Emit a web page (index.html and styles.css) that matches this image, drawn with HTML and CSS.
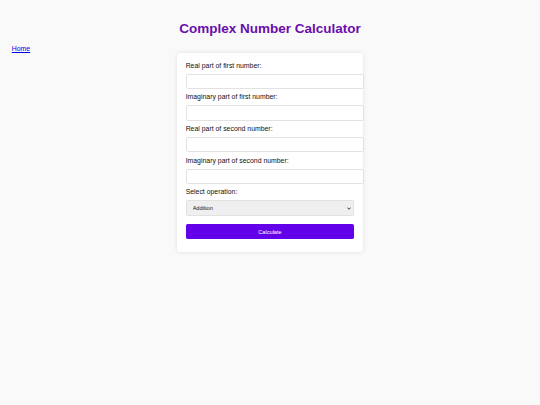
FILE: index.html
```html
<!DOCTYPE html>
<html lang="en">
<head>
<meta charset="utf-8">
<title>Complex Number Calculator</title>
<link rel="stylesheet" href="styles.css">
</head>
<body>
<h1 class="title">Complex Number Calculator</h1>
<div class="nav"><a href="#" class="nav-link">Home</a></div>
<div class="card">
  <form class="calc-form">
    <label class="field-label" for="r1">Real part of first number:</label>
    <input class="field-input" type="text" id="r1">
    <label class="field-label" for="i1">Imaginary part of first number:</label>
    <input class="field-input" type="text" id="i1">
    <label class="field-label" for="r2">Real part of second number:</label>
    <input class="field-input" type="text" id="r2">
    <label class="field-label" for="i2">Imaginary part of second number:</label>
    <input class="field-input" type="text" id="i2">
    <label class="field-label" for="op">Select operation:</label>
    <div class="select-wrap">
      <select class="field-select" id="op">
        <option>Addition</option>
        <option>Subtraction</option>
        <option>Multiplication</option>
        <option>Division</option>
      </select>
      <svg class="chevron" viewBox="0 0 10 7" width="4" height="3"><path d="M1 1.2 L5 5.4 L9 1.2" fill="none" stroke="#222" stroke-width="2.2"/></svg>
    </div>
    <button class="calc-btn" type="button">Calculate</button>
  </form>
</div>
</body>
</html>
```
FILE: styles.css
```css
html, body {
  background: #f9f9f9;
}
body {
  margin: 0;
  padding: 11.8px;
  font-family: "Liberation Sans", Arial, sans-serif;
  font-size: 6.9px;
  color: #111;
}
.title {
  font-size: 13.5px;
  line-height: 15.6px;
  color: #6a0dad;
  text-align: center;
  margin: 9px 0;
  font-weight: bold;
}
.nav {
  line-height: 7.8px;
}
.nav-link {
  color: #0000ee;
  text-decoration: underline;
}
.card {
  width: 168.75px;
  margin: 0 auto;
  padding: 8.44px;
  background: #fff;
  border-radius: 3.4px;
  box-shadow: 0 0 4px rgba(0, 0, 0, 0.1);
}
.calc-form {
  margin: 0;
}
.field-label {
  display: block;
  line-height: 8px;
  margin-bottom: 4.1px;
}
.field-input {
  display: block;
  width: 100%;
  height: 13.2px;
  padding: 0 3.6px;
  margin: 0 0 4.4px 0;
  border: 1px solid #e2e2e2;
  border-radius: 1.7px;
  background: #fff;
  font-family: inherit;
  font-size: 6.9px;
  outline: none;
}
.select-wrap {
  position: relative;
}
.field-select {
  display: block;
  width: 100%;
  box-sizing: border-box;
  height: 16px;
  padding: 0 6px;
  margin: 0;
  -webkit-appearance: none;
  appearance: none;
  background: #efefef;
  border: 1px solid #e2e2e2;
  border-radius: 1.7px;
  font-family: inherit;
  font-size: 5.6px;
  color: #111;
  outline: none;
}
.chevron {
  position: absolute;
  right: 3.5px;
  top: 6.8px;
}
.calc-btn {
  display: block;
  width: 100%;
  height: 14.5px;
  margin: 8px 0 4.3px 0;
  padding: 0;
  border: none;
  border-radius: 1.7px;
  background: #6200ea;
  color: #fff;
  font-family: inherit;
  font-size: 5.6px;
}
```
